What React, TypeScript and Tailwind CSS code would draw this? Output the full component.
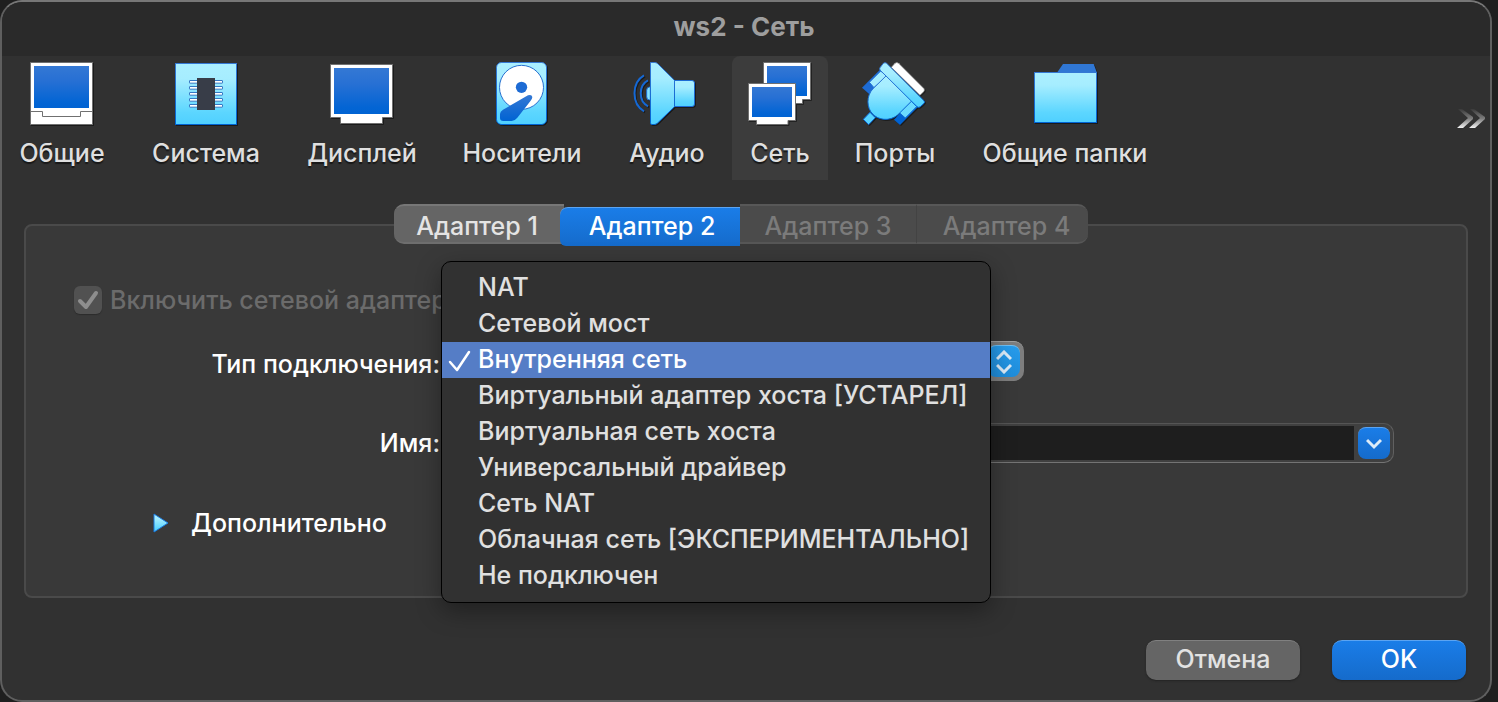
import { ReactNode } from "react";

function Gradients() {
  return (
    <svg className="absolute h-0 w-0" aria-hidden="true">
      <defs>
        <linearGradient id="screen" x1="0" y1="0" x2="0" y2="1">
          <stop offset="0" stopColor="#3478d4" />
          <stop offset="0.35" stopColor="#2770d4" />
          <stop offset="0.85" stopColor="#0465d4" />
          <stop offset="1" stopColor="#0063d3" />
        </linearGradient>
        <linearGradient id="sky" x1="0" y1="0" x2="0" y2="1">
          <stop offset="0" stopColor="#abefff" />
          <stop offset="0.25" stopColor="#a6edff" />
          <stop offset="0.8" stopColor="#5cd6ff" />
          <stop offset="1" stopColor="#4fd0ff" />
        </linearGradient>
        <linearGradient id="edge" x1="0" y1="0" x2="0" y2="1">
          <stop offset="0" stopColor="#3478d4" />
          <stop offset="1" stopColor="#0063d3" />
        </linearGradient>
        <linearGradient id="more" x1="0" y1="0" x2="0" y2="1">
          <stop offset="0" stopColor="#3a3a3a" />
          <stop offset="0.5" stopColor="#7c7c7c" />
          <stop offset="1" stopColor="#f2f2f2" />
        </linearGradient>
      </defs>
    </svg>
  );
}

function Icon({ box, children }: { box: string; children: ReactNode }) {
  return (
    <svg viewBox={box} className="h-16 w-16 shrink-0 overflow-visible drop-shadow-[1px_1px_0_rgba(0,0,0,0.45)]" aria-hidden="true">
      {children}
    </svg>
  );
}

const general = (
  <Icon box="90 186 192 192">
    <rect x="91.500" y="187.500" width="186" height="186" fill="#fff" stroke="#707070" strokeWidth="3" />
    <rect x="102" y="198" width="165" height="126" fill="url(#screen)" />
    <path d="M91 334.500H127.500V349.500H241.500V334.500H277" fill="none" stroke="#707070" strokeWidth="3" />
  </Icon>
);

const system = (
  <Icon box="522 186 192 192">
    <rect x="526.500" y="190.500" width="183" height="183" fill="url(#sky)" stroke="url(#edge)" strokeWidth="3" />
    {[241.5, 259.5, 277.5, 295.5, 313.5].map((y) => (
      <rect key={y} x="568.500" y={y} width="99" height="8" rx="1" fill="#fff" stroke="#3478c4" strokeWidth="3" />
    ))}
    <rect x="591" y="234" width="54" height="96" fill="#383d48" />
  </Icon>
);

const display = (
  <Icon box="90 66 192 192">
    <path d="M91.500 73.500H277.500V232.500H247.500V250.500H121.500V232.500H91.500Z" fill="#fff" stroke="#707070" strokeWidth="3" />
    <rect x="102" y="84" width="165" height="138" fill="url(#screen)" />
  </Icon>
);

const storage = (
  <Icon box="570 66 192 192">
    <rect x="589.500" y="67.500" width="150" height="186" rx="15" fill="url(#sky)" stroke="url(#edge)" strokeWidth="3" />
    <circle cx="664.500" cy="142" r="66" fill="#fff" stroke="#2770d0" strokeWidth="3" />
    <circle cx="664.500" cy="142" r="17" fill="#1d6bd4" />
    <path d="M684 166Q695 162 697 171Q697 176 692 182L652 233Q644 243 635 243H610Q600 243 600 234V222Q600 214 609 209Z" fill="url(#edge)" />
  </Icon>
);

const audio = (
  <Icon box="105 66 192 192">
    <path d="M132 106C94 128 94 192 132 214M144 121C115 136 115 184 144 199" fill="none" stroke="#1568d4" strokeWidth="6" />
    <path d="M151 141H148Q140 142 140 151V170Q140 180 148 180H151Z" fill="#83e2ff" stroke="#1c6bd4" strokeWidth="3" />
    <path d="M223 121.500H276Q283.500 121.500 283.500 129V192Q283.500 199.500 276 199.500H223Z" fill="url(#sky)" stroke="#1c6bd4" strokeWidth="3" />
    <path d="M151.500 67.500H164Q169 67.500 173 71L223.500 121V200L173 249Q168 253.500 163 253.500H155Q151.500 253.500 151.500 248Z" fill="url(#sky)" stroke="url(#edge)" strokeWidth="3" />
  </Icon>
);

const network = (
  <Icon box="444 66 192 192">
    <path d="M490.500 67.500H631.500V178.500H607.500V190.500H513V178.500H490.500Z" fill="#fff" stroke="#707070" strokeWidth="3" />
    <rect x="501" y="78" width="120" height="90" fill="url(#screen)" />
    <path d="M445.500 130.500H586.500V241.500H564V253.500H469.500V241.500H445.500Z" fill="#fff" stroke="#707070" strokeWidth="3" />
    <rect x="456" y="141" width="120" height="90" fill="url(#screen)" />
  </Icon>
);

const ports = (
  <Icon box="69 66 192 192">
    <path d="M154 82L165 70Q170 65 176 70L251 145Q256 150 251 155L240 166Z" fill="#fff" stroke="#888" strokeWidth="2" />
    <path d="M66 143L122 87L144 108L88 163Z" fill="#1d6bd4" />
    <path d="M88 127L122 93L140 108L102 143Z" fill="#a6edff" stroke="#1c6bd4" strokeWidth="3" />
    <path d="M162 239L214 183L233 202L180 255Z" fill="#0063d3" />
    <path d="M178 218L214 183L230 200L196 234Z" fill="#6bdaff" stroke="#1068d4" strokeWidth="3" />
    <path d="M70 238L90 217L106 233L86 254Z" fill="#57d3ff" stroke="#0b66d4" strokeWidth="3" />
    <path d="M140 106L216 182L172 226C146 246 114 239 98 222C80 204 78 168 99 146Z" fill="url(#sky)" stroke="url(#edge)" strokeWidth="3" />
    <path d="M120 83L130 70Q135 66 140 70L252 182Q256 187 251 191L241 200Q236 204 231 200L120 90Q118 86 120 83Z" fill="url(#sky)" stroke="url(#edge)" strokeWidth="3" />
  </Icon>
);

const folder = (
  <Icon box="579 66 192 192">
    <path d="M651 98L669 72H761L771 98Z" fill="#3077d4" />
    <rect x="583.500" y="97.500" width="186" height="150" fill="url(#sky)" stroke="url(#edge)" strokeWidth="3" />
  </Icon>
);

const tools = [
  { label: "Общие", icon: general, width: "w-[120px]" },
  { label: "Система", icon: system, width: "w-[152px]" },
  { label: "Дисплей", icon: display, width: "w-[144px]" },
  { label: "Носители", icon: storage, width: "w-[160px]" },
  { label: "Аудио", icon: audio, width: "w-[114px]" },
  { label: "Сеть", icon: network, width: "w-[96px]", active: true },
  { label: "Порты", icon: ports, width: "w-[118px]" },
  { label: "Общие папки", icon: folder, width: "w-[206px]" },
];

const options = [
  "NAT",
  "Сетевой мост",
  "Внутренняя сеть",
  "Виртуальный адаптер хоста [УСТАРЕЛ]",
  "Виртуальная сеть хоста",
  "Универсальный драйвер",
  "Сеть NAT",
  "Облачная сеть [ЭКСПЕРИМЕНТАЛЬНО]",
  "Не подключен",
];

function Toolbar() {
  return (
    <nav className="flex items-start gap-2">
      {tools.map((tool) => (
        <button
          key={tool.label}
          type="button"
          className={`flex h-[124px] shrink-0 flex-col items-center gap-2 rounded-t-lg pt-1.5 whitespace-nowrap text-[#dfdfdf] [text-shadow:0_2px_1px_#181818] ${tool.width} ${tool.active ? "bg-[#3c3c3c]" : ""}`}
        >
          {tool.icon}
          <span className="leading-[38px]">{tool.label}</span>
        </button>
      ))}
      <button type="button" aria-label="Ещё" className="mt-[52px] mr-1 ml-auto">
        <svg viewBox="0 0 30 20" className="h-5 w-[30px]" aria-hidden="true">
          <path d="M2 1H6L17 9V11L7 20H1L12 10Z" fill="url(#more)" />
          <path d="M14 1H18L29 9V11L19 20H13L24 10Z" fill="url(#more)" />
        </svg>
      </button>
    </nav>
  );
}

function Tabs() {
  return (
    <div role="tablist" className="relative -mb-[22px] flex h-[42px] justify-center pr-2.5">
      <button
        type="button"
        role="tab"
        aria-selected="false"
        className="h-10 w-[166px] rounded-l-[10px] border-y-2 border-t-[#777] border-b-[#6e6e6e] bg-[#656565] pt-0.5 text-[#e4e4e4]"
      >
        Адаптер 1
      </button>
      <span className="h-10 w-1 border-y-2 border-t-[#777] border-b-[#6e6e6e] bg-[#656565]" />
      <button
        type="button"
        role="tab"
        aria-selected="true"
        className="-ml-1 mt-[3px] h-[39px] w-[180px] rounded-tl-lg rounded-bl-md border-t border-[#5ba4f2] bg-linear-to-b from-[#1a7de8] to-[#156bcb] pb-1 pl-1 text-white"
      >
        Адаптер 2
      </button>
      <button
        type="button"
        role="tab"
        aria-selected="false"
        disabled
        className="h-10 w-[177px] border-y-2 border-r border-t-[#585858] border-r-[#434343] border-b-[#575757] bg-[#4b4b4b] pt-0.5 text-[#7b7b7b]"
      >
        Адаптер 3
      </button>
      <button
        type="button"
        role="tab"
        aria-selected="false"
        disabled
        className="h-10 w-[171px] rounded-r-[10px] border-y-2 border-t-[#585858] border-b-[#575757] bg-[#4b4b4b] pt-0.5 pl-2 text-[#7b7b7b]"
      >
        Адаптер 4
      </button>
    </div>
  );
}

function OptionMenu() {
  return (
    <ul
      role="listbox"
      aria-label="Тип подключения"
      className="absolute -top-20 -left-px z-10 w-[550px] rounded-[10px] border border-black bg-[#313131] py-2 text-[#e0e0e0] shadow-[0_8px_24px_rgba(0,0,0,0.35)]"
    >
      {options.map((option) => {
        const selected = option === "Внутренняя сеть";
        return (
          <li
            key={option}
            role="option"
            aria-selected={selected}
            className={`flex h-9 items-center whitespace-nowrap ${selected ? "bg-[#557dc6] text-white" : ""}`}
          >
            <span className="flex w-9 shrink-0 justify-center">
              {selected && (
                <svg viewBox="0 0 24 24" className="h-6 w-6" aria-hidden="true">
                  <path d="M2 14L9 22L21 4" fill="none" stroke="#fff" strokeWidth="2.500" strokeLinecap="round" strokeLinejoin="round" />
                </svg>
              )}
            </span>
            {option}
          </li>
        );
      })}
    </ul>
  );
}

export default function App() {
  return (
    <div className="bg-[#1f1f1f] pr-1.5 font-['Inter','Liberation_Sans',sans-serif] text-[25px] font-medium">
      <Gradients />
      <main className="overflow-hidden rounded-[22px] border-2 border-[#5f5f5f] border-t-[#777] bg-[#313131] pb-5">
        <header className="h-[54px] bg-[#2a2a2a] pr-1">
          <h1 className="text-center text-[26px] leading-[50px] font-bold text-[#9e9e9e]">ws2 - Сеть</h1>
        </header>
        <Toolbar />
        <section className="mt-6 px-[22px]">
          <Tabs />
          <form className="rounded-lg border-2 border-[#4a4a4a] bg-[#393939] pt-[54px] pr-[72px] pb-[53px]">
            <label className="flex h-10 items-center gap-2 pl-12 text-[#6b6b6b]">
              <span className="relative h-7 w-7">
                <input
                  type="checkbox"
                  checked
                  disabled
                  readOnly
                  className="block h-7 w-7 appearance-none rounded-md bg-[#515151] shadow-[0_1px_1px_#2c2c2c]"
                />
                <svg viewBox="0 0 28 28" className="pointer-events-none absolute inset-0 h-7 w-7" aria-hidden="true">
                  <path d="M6 15L12 21L22 7" fill="none" stroke="#8e8e8e" strokeWidth="4" strokeLinecap="round" strokeLinejoin="round" />
                </svg>
              </span>
              <span className="pt-0.5">Включить сетевой адаптер</span>
            </label>

            <div className="mt-[21px] flex h-10 items-center">
              <label htmlFor="attachment" className="w-[416px] shrink-0 pt-2 pr-0.5 text-right text-white">
                Тип подключения:
              </label>
              <div className="relative">
                <select
                  id="attachment"
                  defaultValue="Внутренняя сеть"
                  className="block h-10 w-[582px] appearance-none rounded-[10px] border-t border-[#a0a0a0] bg-[#7e7e7e] pl-5 text-white"
                >
                  {options.map((option) => (
                    <option key={option}>{option}</option>
                  ))}
                </select>
                <span className="pointer-events-none absolute top-1 right-1 flex h-8 w-8 items-center justify-center rounded-lg border-t border-[#6fc0f5] bg-linear-to-b from-[#279cec] to-[#1f8ddb]">
                  <svg viewBox="0 0 16 24" className="h-6 w-4" aria-hidden="true">
                    <path d="M1 9L8 2L15 9M1 15L8 22L15 15" fill="none" stroke="#dcebf8" strokeWidth="3" />
                  </svg>
                </span>
                <OptionMenu />
              </div>
            </div>

            <div className="mt-[42px] flex h-10 items-center">
              <label htmlFor="network-name" className="w-[416px] shrink-0 pt-0.5 pr-0.5 text-right text-white">
                Имя:
              </label>
              <div className="flex h-10 grow items-center gap-1 rounded-[10px] border border-t-[#555] border-r-[#606060] border-b-[#747474] border-l-[#555] bg-[#404040] pr-[3px]">
                <input id="network-name" type="text" className="h-[34px] min-w-0 grow rounded-l-lg bg-[#1e1e1e] px-2 text-white outline-none" />
                <button
                  type="button"
                  aria-label="Показать список сетей"
                  className="flex h-8 w-8 shrink-0 items-center justify-center rounded-lg border-t border-[#5ba4f2] bg-linear-to-b from-[#1a7de8] to-[#156bcb]"
                >
                  <svg viewBox="0 0 16 12" className="h-3 w-4" aria-hidden="true">
                    <path d="M1 2L8 9L15 2" fill="none" stroke="#dcebf8" strokeWidth="3" />
                  </svg>
                </button>
              </div>
            </div>

            <button type="button" className="mt-10 flex h-10 items-center gap-[22px] pl-[127px] text-white">
              <svg viewBox="0 0 16 20" className="h-5 w-4" aria-hidden="true">
                <path d="M1 1L15 10L1 19Z" fill="url(#sky)" stroke="#1a7ae0" strokeWidth="1" />
              </svg>
              <span className="pt-0.5">Дополнительно</span>
            </button>
          </form>
        </section>
        <footer className="mt-[42px] flex justify-end gap-8 pr-6">
          <button type="button" className="h-10 w-[154px] rounded-[10px] border-t border-[#808080] bg-[#656565] pb-0.5 text-[#e2e2e2] shadow-[0_1px_2px_#222]">
            Отмена
          </button>
          <button
            type="button"
            className="h-10 w-[134px] rounded-[10px] border-t border-[#5ba4f2] bg-linear-to-b from-[#1a7de8] to-[#156bcb] pb-0.5 text-white shadow-[0_1px_2px_#222]"
          >
            OK
          </button>
        </footer>
      </main>
    </div>
  );
}
